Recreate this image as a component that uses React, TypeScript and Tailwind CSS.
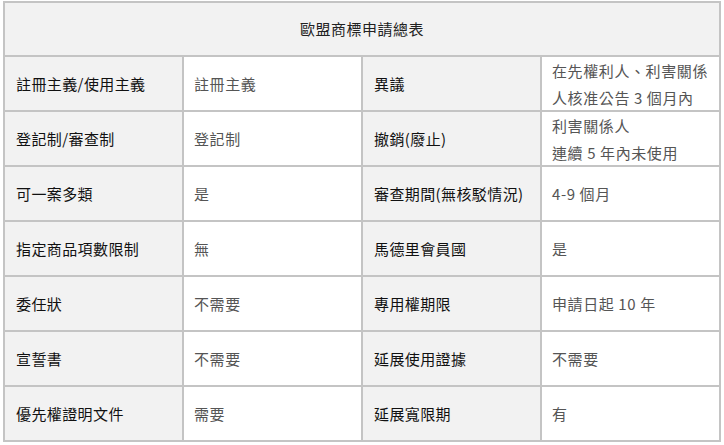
import React from 'react'

type Row = {
  label1: string
  value1: string[]
  label2: string
  value2: string[]
}

const rows: Row[] = [
  { label1: '註冊主義/使用主義', value1: ['註冊主義'], label2: '異議', value2: ['在先權利人、利害關係', '人核准公告 3 個月內'] },
  { label1: '登記制/審查制', value1: ['登記制'], label2: '撤銷(廢止)', value2: ['利害關係人', '連續 5 年內未使用'] },
  { label1: '可一案多類', value1: ['是'], label2: '審查期間(無核駁情況)', value2: ['4-9 個月'] },
  { label1: '指定商品項數限制', value1: ['無'], label2: '馬德里會員國', value2: ['是'] },
  { label1: '委任狀', value1: ['不需要'], label2: '專用權期限', value2: ['申請日起 10 年'] },
  { label1: '宣誓書', value1: ['不需要'], label2: '延展使用證據', value2: ['不需要'] },
  { label1: '優先權證明文件', value1: ['需要'], label2: '延展寬限期', value2: ['有'] },
]

const font = { fontFamily: '"Noto Sans CJK TC", "Noto Sans", sans-serif' }

function Label({ text }: { text: string }) {
  return (
    <div className="h-[53px] bg-[#f2f2f2] pl-[11px] flex items-center text-[15px] leading-[27px] tracking-[0.4px] text-[#111]">
      {text}
    </div>
  )
}

function Value({ lines }: { lines: string[] }) {
  return (
    <div className="h-[53px] bg-white pl-[10px] flex flex-col justify-center text-[15px] tracking-[0.6px] text-[#555] leading-[27px]">
      {lines.map((l) => (
        <div key={l}>{l}</div>
      ))}
    </div>
  )
}

export default function App() {
  return (
    <div className="w-[724px] h-[445px] bg-white pt-px pl-[3px]" style={font}>
      <div className="w-[718px] bg-[#c4c4c4] p-[2px] grid grid-cols-4 gap-[2px]">
        <div className="col-span-4 h-[52px] bg-[#f2f2f2] flex items-center justify-center text-[15px] tracking-[0.5px] text-[#222]">
          歐盟商標申請總表
        </div>
        {rows.map((r) => (
          <React.Fragment key={r.label1}>
            <Label text={r.label1} />
            <Value lines={r.value1} />
            <Label text={r.label2} />
            <Value lines={r.value2} />
          </React.Fragment>
        ))}
      </div>
    </div>
  )
}
